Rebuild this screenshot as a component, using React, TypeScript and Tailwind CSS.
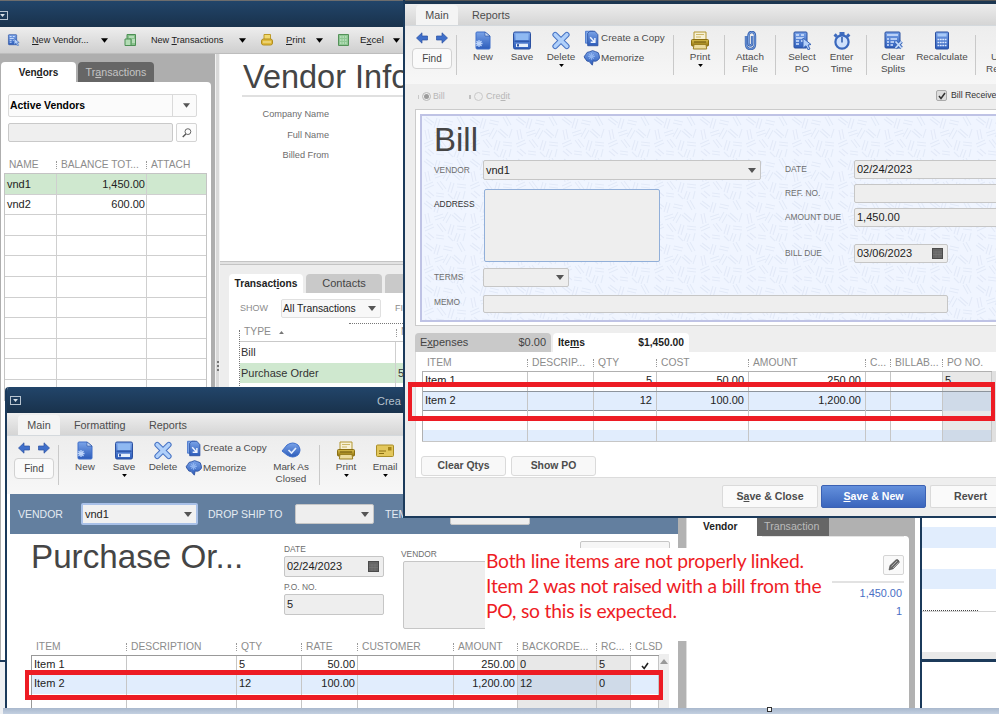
import type { ReactNode } from 'react';
import clsx from 'clsx';

type IconName = 'new' | 'save' | 'delete' | 'copy' | 'memorize' | 'print' | 'attach' | 'select' | 'time' | 'clear' | 'calc' | 'check' | 'email';

const blue = '#3f6fca';
const navy = '#2b50a0';

function Icon({ name, className = 'w-5 h-[19px]' }: { name: IconName; className?: string }) {
  return (
    <svg viewBox="0 0 20 19" className={clsx('shrink-0', className)} fill="none">
      <defs>
        <linearGradient id="ib" x1="0" y1="0" x2="0" y2="1">
          <stop offset="0" stopColor="#7aa3e8" />
          <stop offset="1" stopColor="#2c5cba" />
        </linearGradient>
        <linearGradient id="ig" x1="0" y1="0" x2="0" y2="1">
          <stop offset="0" stopColor="#d8bd4c" />
          <stop offset="1" stopColor="#917410" />
        </linearGradient>
      </defs>
      {name === 'new' && (
        <>
          <path d="M4 1h8l5 4v12q0 1-1 1H4q-1 0-1-1V2q0-1 1-1z" fill="url(#ib)" stroke={blue} />
          <path d="M12 1v4h5z" fill="#c6daf8" stroke={navy} strokeWidth=".6" />
          <path d="M6 9v7M2.500 12.500h7M3.500 10l5 5M8.500 10l-5 5" stroke="#bcd4fa" strokeWidth="1.300" />
        </>
      )}
      {name === 'save' && (
        <>
          <rect x="1.500" y="1" width="17" height="17" rx="1.500" fill="url(#ib)" stroke={navy} />
          <path d="M3.500 2.500h13v6.500h-13z" fill="#8fb9f2" />
          <path d="M2.500 10.200h15" stroke="#234b9d" />
          <rect x="4" y="12.700" width="12" height="3.300" fill="#e6effb" />
          <rect x="5" y="13.200" width="2" height="2.300" fill={navy} />
        </>
      )}
      {name === 'delete' && (
        <>
          <path d="M4.200 3.700l11.600 11.600M15.800 3.700L4.200 15.300" stroke="#4773c4" strokeWidth="5.600" strokeLinecap="round" />
          <path d="M4.200 3.700l11.600 11.600M15.800 3.700L4.200 15.300" stroke="#b0d0fa" strokeWidth="3.600" strokeLinecap="round" />
        </>
      )}
      {name === 'copy' && (
        <>
          <path d="M3 1h9v14H3z" fill="#7ea6e6" stroke={blue} />
          <path d="M5.500 3.500L8 1h6l3.500 4v13h-12z" fill="url(#ib)" stroke={navy} />
          <path d="M8.500 8l5 5.500M14 9v5H9" stroke="#eef4ff" strokeWidth="1.700" />
        </>
      )}
      {name === 'memorize' && (
        <>
          <path d="M3 11Q-.5 8 3 5.500 4 2 8 2q3-2.500 7 0 4 .5 4 4 2 4-2 6.500-2 1.500-5 .5l-1 5-4-4.500Q4 14 3 11z" fill="url(#ib)" stroke={navy} />
          <path d="M10 3.500v8M6 7.500h8M7.300 4.800l5.400 5.400M12.700 4.800l-5.400 5.400" stroke="#8fb4f0" strokeWidth="1.400" />
        </>
      )}
      {name === 'print' && (
        <>
          <path d="M4 1h12v9H4z" fill="#f7f1d6" stroke="#b39732" />
          <path d="M6 3.500h8M6 6h5" stroke="#ccb767" />
          <rect x="1.500" y="8.500" width="17" height="6.500" rx="1" fill="url(#ig)" stroke="#8a6e12" />
          <path d="M4 13.500h12l.7 4.500H3.300z" fill="#ecdc9d" stroke="#9b8022" />
          <path d="M4 11h12" stroke="#6f570c" />
        </>
      )}
      {name === 'attach' && (
        <>
          <path d="M6 5v8q0 5 4.500 5t4.500-5V5q0-4-3.200-4T8.500 5v7.500q0 2 1.800 2t1.800-2V5" stroke="#3560ad" strokeWidth="2.400" />
          <path d="M6 5v8q0 5 4.500 5t4.500-5V5q0-4-3.200-4T8.500 5v7.500q0 2 1.800 2t1.800-2V5" stroke="#88b0ee" strokeWidth=".8" />
        </>
      )}
      {name === 'select' && (
        <>
          <rect x="2" y="1" width="13" height="16" rx="1" fill="url(#ib)" stroke={navy} />
          <path d="M4 4h3M9 4h3M4 7h8M4 10h3M4 13h3M9 10h3" stroke="#d5e5ff" strokeWidth="1.500" />
          <path d="M11 7l8 6.500-3 .5 2 4-2 .8-2-4-3 2.200z" fill="#b5d1fa" stroke="#3b67b8" />
        </>
      )}
      {name === 'time' && (
        <>
          <path d="M7.500 1h5v3h-5zM1.500 4.500l2.200-2.200 2.200 2.200-2.200 2.200zM14 4.500l2.200-2.200 2.200 2.200-2.200 2.200z" fill="#3f6cbf" />
          <circle cx="10" cy="11" r="6.600" fill="#cfe1fc" stroke="#3a68bd" strokeWidth="2.200" />
          <path d="M10 6v5.500" stroke="#3560ad" strokeWidth="1.600" />
        </>
      )}
      {name === 'clear' && (
        <>
          <rect x="2" y="1" width="15" height="16" rx="1" fill="url(#ib)" stroke={navy} />
          <path d="M4 4h11M4 8h2M7.500 8H14M4 11h2M7.500 11H11M4 14h2M7.500 14H10" stroke="#d5e5ff" strokeWidth="1.400" />
          <path d="M12.500 10.500l6 6.500M18.500 10.500l-6 6.500" stroke="#3d69ba" strokeWidth="3.600" />
          <path d="M12.500 10.500l6 6.500M18.500 10.500l-6 6.500" stroke="#c5dbfb" strokeWidth="1.800" />
        </>
      )}
      {name === 'calc' && (
        <>
          <rect x="3.500" y="1" width="13" height="17" rx="1" fill="url(#ib)" stroke={navy} />
          <path d="M5.500 4h9" stroke="#a9caf8" strokeWidth="3" />
          <path d="M5.500 8.500h9M5.500 11.500h9M5.500 14.500h9" stroke="#dce9ff" strokeWidth="1.700" strokeDasharray="1.800 .6" />
        </>
      )}
      {name === 'check' && (
        <>
          <path d="M1 10l5-6q6-4 11 0 4 5 0 10-5 4-11 0z" fill="url(#ib)" stroke={blue} />
          <path d="M7.500 9l3 3 4.500-5" stroke="#e3eeff" strokeWidth="1.700" />
        </>
      )}
      {name === 'email' && (
        <>
          <rect x="1.500" y="4" width="17" height="11.500" rx="1" fill="#e3c75c" stroke="#a98d27" />
          <path d="M4 10h7M4 12.500h5" stroke="#8a6e12" />
          <rect x="13" y="6" width="3.500" height="3.500" fill="#a68518" />
        </>
      )}
    </svg>
  );
}

function Caret({ className = 'text-[#555]' }: { className?: string }) {
  return (
    <svg viewBox="0 0 8 5" className={clsx('w-2 h-[5px] shrink-0', className)} fill="currentColor">
      <path d="M0 0h8L4 5z" />
    </svg>
  );
}

function WindowMenu() {
  return (
    <span className="flex h-[9px] w-[11px] items-center justify-center border border-[#b8c4d0]">
      <Caret className="w-[5px]! h-[3px]! text-[#dbe3ea]" />
    </span>
  );
}

function ToolButton({ icon, label, className, menu }: { icon: IconName; label: ReactNode; className: string; menu?: boolean }) {
  return (
    <div className={clsx('flex shrink-0 flex-col items-center pt-[5px] text-center text-[9.900px] leading-3 text-[#4c4c4c]', className)}>
      <Icon name={icon} />
      <div className="mt-[1px] whitespace-nowrap">{label}</div>
      {menu && <Caret className="mt-[1px] w-[5px]! h-[3px]! text-black" />}
    </div>
  );
}

function Divider({ className }: { className?: string }) {
  return <div className={clsx('mt-[9px] h-10 w-px shrink-0 bg-[#c9c9c9]', className)} />;
}

function Arrow({ flip }: { flip?: boolean }) {
  return (
    <svg viewBox="0 0 12 12" className={clsx('h-3 w-3', flip && 'rotate-180')}>
      <path d="M.5 6L6 .8V4h5.500v4H6v3.200z" fill={blue} stroke={navy} strokeWidth=".7" />
    </svg>
  );
}

function ToolbarStart({ saveMenu, deleteMenu }: { saveMenu?: boolean; deleteMenu?: boolean }) {
  return (
    <>
      <div className="ml-[7px] w-10 shrink-0 pt-[6px]">
        <div className="flex justify-between pl-1 pr-1">
          <Arrow />
          <Arrow flip />
        </div>
        <div className="mt-[4px] flex h-[21px] items-center justify-center rounded-sm border border-[#d2d2d2] bg-[#fafafa] text-[10px] text-[#444]">Find</div>
      </div>
      <Divider className="ml-[4px]" />
      <ToolButton icon="new" label="New" className="ml-[6px] w-10" />
      <ToolButton icon="save" label="Save" className="w-[38px]" menu={saveMenu} />
      <ToolButton icon="delete" label="Delete" className="w-10" menu={deleteMenu} />
      <div className="ml-[2px] flex w-[88px] shrink-0 flex-col gap-[3px] pt-[3px] text-[9.900px] text-[#4c4c4c]">
        <div className="flex h-[17px] items-center gap-px pt-px">
          <Icon name="copy" className="h-[17px] w-[17px]" />
          Create a Copy
        </div>
        <div className="flex h-[17px] items-center gap-px pt-px">
          <Icon name="memorize" className="h-4 w-[17px]" />
          Memorize
        </div>
      </div>
    </>
  );
}

function Calendar() {
  return (
    <svg viewBox="0 0 11 11" className="h-[11px] w-[11px]">
      <rect x=".5" y=".5" width="10" height="10" fill="#666" stroke="#4b4b4b" />
      <path d="M1 4h9M1 6.500h9M4 3v7M7 3v7" stroke="#7a7a7a" strokeWidth=".6" />
    </svg>
  );
}

function Field({ className, children }: { className?: string; children?: ReactNode }) {
  return (
    <div className={clsx('flex shrink-0 items-center justify-between rounded-[2px] border border-[#c6c6c6] bg-[#eeeeee] pl-[2px] pr-1 text-[11px] text-[#222]', className)}>
      {children}
    </div>
  );
}

function HeaderCell({ children, first }: { children?: ReactNode; first?: boolean }) {
  return (
    <div className="flex items-center whitespace-nowrap pl-[5px]">
      {!first && <span className="-ml-[5px] mr-[4px] h-[8px] shrink-0 border-l border-dotted border-[#999]" />}
      {children}
    </div>
  );
}

function VendorCenter() {
  const vendors = [['vnd1', '1,450.00'], ['vnd2', '600.00'], ...Array(9).fill(['', ''])];
  return (
    <div className="absolute left-0 top-0 flex h-[662px] w-[420px] flex-col overflow-hidden border-b-2 border-[#1c3a5a] bg-white">
      <div className="flex h-[27px] shrink-0 items-center border-t border-[#6d6d6d] bg-gradient-to-b from-[#22456a] to-[#19324c] pt-[2px]">
        <div className="-ml-[3px]"><WindowMenu /></div>
      </div>
      <div className="flex h-[27px] shrink-0 items-center border-b border-[#bdbdbd] bg-gradient-to-b from-[#eeeeee] to-[#cfcfcf] text-[9.100px] text-[#222]">
        <Icon name="select" className="ml-[7px] h-3 w-[13px]" />
        <span className="ml-[12px] w-[69px] pt-px"><u>N</u>ew Vendor...</span>
        <Caret className="w-[7px]! text-black" />
        <svg viewBox="0 0 12 12" className="ml-[16px] h-3 w-3">
          <path d="M3 .5h8.500v11H3z" fill="#88c28c" stroke="#4d8f55" />
          <path d="M1 5h6v6.500H1z" fill="#b3dcb5" stroke="#4d8f55" />
          <path d="M5 3h5M8 6h3M8 8h3" stroke="#e3f4e3" />
        </svg>
        <span className="ml-[15px] w-[88px] pt-px">New <u>T</u>ransactions</span>
        <Caret className="w-[7px]! text-black" />
        <svg viewBox="0 0 12 12" className="ml-[15px] h-3 w-3">
          <path d="M3 .5h6.500V6H3z" fill="#f1d970" stroke="#bd9a28" />
          <rect x=".5" y="5" width="11" height="6" rx="2" fill="#dfb93b" stroke="#b18d1f" />
          <path d="M2 8h8" stroke="#f7e9a6" />
        </svg>
        <span className="ml-[13px] w-[30px] pt-px text-[9.400px]"><u>P</u>rint</span>
        <Caret className="w-[7px]! text-black" />
        <svg viewBox="0 0 11 12" className="ml-[15px] h-3 w-[11px]">
          <path d="M.5.5h10v11H.5z" fill="#8ec793" stroke="#549159" />
          <path d="M2 3h7M2 6h7M2 9h7" stroke="#d9f0da" strokeDasharray="1.500 1" />
        </svg>
        <span className="ml-[11px] w-[33px] pt-px text-[9.800px]">E<u>x</u>cel</span>
        <Caret className="w-[7px]! text-black" />
      </div>
      <div className="flex min-h-0 flex-1">
        <div className="flex w-[215px] shrink-0 flex-col bg-[#aeaeae] pl-px pt-2">
          <div className="flex h-5 gap-[2px]">
            <div className="flex w-[75px] items-center justify-center rounded-t-sm bg-white text-[10px] font-bold text-[#222]">Ven<u>d</u>ors</div>
            <div className="flex w-[76px] items-center justify-center rounded-t-sm bg-[#666] text-[10.700px] text-[#c4c4c4]">Tr<u>a</u>nsactions</div>
          </div>
          <div className="min-h-0 w-[210px] flex-1 overflow-hidden rounded-tr-sm bg-white pt-3">
            <div className="ml-[7px] flex h-[23px] w-[189px] items-center rounded-[2px] border border-[#dadada] bg-[#fbfbfb] text-[10.400px] font-bold text-black">
              <span className="w-[163px] pl-px">Active Vendors</span>
              <span className="flex h-full flex-1 items-center justify-center border-l border-[#dadada] pl-1"><Caret className="w-[7px]! text-[#555]" /></span>
            </div>
            <div className="ml-[7px] mt-[6px] flex h-[19px] gap-[3px]">
              <div className="w-[165px] rounded-[2px] border border-[#c9c9c9] bg-[#efefef]" />
              <div className="flex w-[21px] items-center justify-center rounded-[2px] border border-[#d4d4d4] bg-[#fcfcfc]">
                <svg viewBox="0 0 11 11" className="h-[10px] w-[10px]" fill="none" stroke="#555">
                  <circle cx="6.500" cy="4" r="3.200" />
                  <path d="M4.200 6.500L.8 10" strokeWidth="1.500" />
                </svg>
              </div>
            </div>
            <div className="mt-[14px] grid h-[17px] grid-cols-[52px_90px_60px] pl-[3px] text-[10.200px] text-[#8c8c8c]">
              <HeaderCell first>NAME</HeaderCell>
              <HeaderCell>BALANCE TOT...</HeaderCell>
              <HeaderCell>ATTACH</HeaderCell>
            </div>
            <div className="ml-[3px] w-[203px] border-x border-t border-[#c4c4c4]">
              {vendors.map(([name, total], i) => (
                <div key={i} className={clsx('grid h-[20.600px] grid-cols-[52px_90px_59px] border-b border-[#cfcfcf] text-[11px] text-[#222]', i === 0 && 'bg-[#cfe8cf]')}>
                  <div className="flex items-center border-r border-[#cfcfcf] pl-[2px]">{name}</div>
                  <div className="flex items-center justify-end border-r border-[#cfcfcf] pr-px">{total}</div>
                </div>
              ))}
            </div>
          </div>
        </div>
        <div className="flex w-[5px] shrink-0 flex-col items-center border-x border-[#f2f2f2] bg-[#d9d9d9] pt-[307px]">
          <span className="h-[10px] border-l-2 border-dotted border-[#777]" />
        </div>
        <div className="flex flex-1 flex-col bg-white">
          <div className="h-[207px] shrink-0">
            <div className="ml-[22px] h-[43px] whitespace-nowrap border-b-2 border-[#e0e0e0] pl-px pt-[4px] text-[32.500px] leading-[38px] text-[#454545]">Vendor Info</div>
            <div className="mt-[7px] w-[109px] text-right text-[9.200px] leading-[20.500px] text-[#6d6d6d]">
              <div>Company Name</div>
              <div>Full Name</div>
              <div>Billed From</div>
            </div>
          </div>
          <div className="h-[4px] shrink-0 border-y border-[#c4c4c4] bg-[#e2e2e2]" />
          <div className="min-h-0 flex-1 bg-[#ededed] pl-[9px] pt-[9px]">
            <div className="flex h-[19px] gap-[3px] text-[11px] text-[#444]">
              <div className="flex w-[74px] items-center justify-center rounded-t-sm bg-white text-[10.200px] font-bold text-[#222]">Transact<u>i</u>ons</div>
              <div className="flex w-[76px] items-center justify-center rounded-t-sm bg-[#c9c9c9]">Contacts</div>
              <div className="flex-1 rounded-t-sm bg-[#c9c9c9]" />
            </div>
            <div className="h-[360px] bg-white pt-[6px]">
              <div className="flex h-[19px] items-center text-[9px] text-[#8c8c8c]">
                <span className="w-[52px] pl-[11px]">SHOW</span>
                <span className="flex h-[19px] w-[100px] items-center justify-between rounded-[2px] border border-[#e0e0e0] bg-[#f8f8f8] pl-px pr-1 text-[10.300px] text-[#222]">All Transactions <Caret /></span>
                <span className="ml-[14px]">FI</span>
              </div>
              <div className="ml-[120px] mt-[5px] w-[56px] border-t border-dotted border-[#777]" />
              <div className="ml-[10px] mt-[6px] border-l border-dotted border-[#777]">
                <div className="grid h-[12px] grid-cols-[156px_60px] border-b border-[#c9c9c9] text-[10.300px] leading-none text-[#8c8c8c]">
                  <div className="-mt-[6px] flex items-center gap-[8px] pl-[4px]">TYPE <Caret className="w-[5px]! h-[3px]! rotate-180 text-[#777]" /></div>
                  <div className="-mt-[6px] flex"><HeaderCell>N</HeaderCell></div>
                </div>
                {[['Bill', ''], ['Purchase Order', '5'], ['', '']].map(([type, num]) => (
                  <div key={type} className={clsx('grid h-[20.500px] grid-cols-[156px_60px] text-[11px] text-[#333]', num && 'bg-[#cfe8cf]')}>
                    <div className="flex items-center border-r border-[#cfcfcf] pl-px">{type}</div>
                    <div className="flex items-center pl-[2px]">{num}</div>
                  </div>
                ))}
              </div>
            </div>
          </div>
        </div>
      </div>
    </div>
  );
}

function BackgroundList() {
  return (
    <div className="absolute left-[921px] top-[506px] flex h-[156px] w-[75px] flex-col border-b-[3px] border-[#1c3a5a] bg-white">
      <div className="mt-[21px] h-[21px] shrink-0 bg-[#e1edfd]" />
      <div className="mt-[21px] h-[20px] shrink-0 bg-[#e1edfd]" />
      <div className="mt-[21px] w-[57px] border-t border-dotted border-[#444]" />
      <div className="border-t border-[#d4d4d4]" />
      <div className="mt-auto h-[7px] bg-[#e9e9e9]" />
    </div>
  );
}

function PurchaseOrderWindow() {
  const rows = [
    ['Item 1', '5', '50.00', '250.00', '0', '5'],
    ['Item 2', '12', '100.00', '1,200.00', '12', '0'],
    ['', '', '', '', '', ''],
  ];
  return (
    <div className="absolute left-[5px] top-[387px] flex h-[322px] w-[917px] flex-col overflow-hidden rounded-tl-sm border-x-2 border-[#1b3a5b] bg-white">
      <div className="flex h-[26px] shrink-0 items-center bg-gradient-to-b from-[#22456a] to-[#19324c] pl-[3px] text-[11px] text-[#b6c1cc]">
        <WindowMenu />
        <span className="ml-[356px] mt-[2px]">Crea</span>
      </div>
      <div className="flex h-[23px] shrink-0 items-end border-b border-[#d4d9dd] bg-gradient-to-b from-[#efefef] to-[#d5d5d5] text-[10.800px] text-[#4c4c4c]">
        <div className="ml-[11px] flex h-[20px] w-[42px] items-center justify-center rounded-t-sm bg-[#f4f4f4]">Main</div>
        <div className="ml-[14px] flex h-[20px] w-[75px] items-center">Formatting</div>
        <div className="flex h-[20px] items-center">Reports</div>
      </div>
      <div className="flex h-[58px] shrink-0 bg-gradient-to-b from-[#ededed] to-[#f7f7f7]">
        <ToolbarStart saveMenu />
        <ToolButton icon="check" label={<>Mark As<br />Closed</>} className="-ml-[4px] w-[44px]" />
        <Divider className="ml-[6px]" />
        <ToolButton icon="print" label="Print" className="ml-[6px] w-10" menu />
        <ToolButton icon="email" label="Email" className="w-[38px]" menu />
      </div>
      <div className="flex min-h-0 flex-1">
        <div className="flex w-[671px] shrink-0 flex-col">
          <div className="ml-[3px] flex h-[40px] shrink-0 items-center bg-[#637f9f] text-[10.500px] text-[#e4ebf2]">
            <span className="w-[71px] pl-2 pt-[2px]">VENDOR</span>
            <Field className="h-[22px] w-[117px] border-2! border-[#a9c1e8]! bg-[#f1f1f1]! pr-[4px]">vnd1 <Caret /></Field>
            <span className="w-[97px] pl-[10px] pt-[2px]">DROP SHIP TO</span>
            <Field className="h-[20px] w-[79px]"><span /> <Caret /></Field>
            <span className="w-[76px] pl-[11px] pt-[2px]">TEM</span>
            <Field className="mt-[2px] h-[20px] w-[80px]" />
          </div>
          <div className="flex h-[105px] shrink-0">
            <div className="w-[277px] whitespace-nowrap pl-[24px] pt-[4px] text-[33.200px] leading-[38px] text-[#454545]">Purchase Or...</div>
            <div className="w-[117px] pt-[10px] text-[8.400px] leading-[11px] text-[#6d6d6d]">
              <div>DATE</div>
              <Field className="mt-px h-[21px] w-[100px]">02/24/2023 <Calendar /></Field>
              <div className="mt-[5px]">P.O. NO.</div>
              <Field className="mt-px h-[21px] w-[100px]">5</Field>
            </div>
            <div className="w-[179px] pt-[15px] text-[8.400px] leading-[11px] text-[#6d6d6d]">
              <div>VENDOR</div>
              <Field className="ml-[2px] mt-px h-[68px] w-[140px]" />
            </div>
            <Field className="mt-[7px] h-[20px] w-[90px] bg-[#f6f6f6]!"><span /> <Caret /></Field>
          </div>
          <div className="ml-[24px] flex">
            <div className="w-[628px]">
              <div className="grid h-[16px] grid-cols-[95px_110px_65px_56px_96px_64px_79px_34px_29px] text-[10.300px] text-[#8c8c8c]">
                <HeaderCell first>ITEM</HeaderCell>
                <HeaderCell>DESCRIPTION</HeaderCell>
                <HeaderCell>QTY</HeaderCell>
                <HeaderCell>RATE</HeaderCell>
                <HeaderCell>CUSTOMER</HeaderCell>
                <HeaderCell>AMOUNT</HeaderCell>
                <HeaderCell>BACKORDE...</HeaderCell>
                <HeaderCell>RC...</HeaderCell>
                <HeaderCell>CLSD</HeaderCell>
              </div>
              <div className="border-l border-t border-[#999]">
                {rows.map(([item, qty, rate, amount, back, rcvd], i) => (
                  <div key={i} className={clsx('grid h-[19px] grid-cols-[95px_110px_65px_56px_96px_64px_79px_34px_28px] text-[11px] text-[#222] *:flex *:items-center *:border-r *:border-[#c6c6c6] *:pb-[3px]', i === 1 && 'bg-[#e1edfd]')}>
                    <div className="pl-[2px]">{item}</div>
                    <div />
                    <div className="pl-[2px]">{qty}</div>
                    <div className="justify-end pr-[2px]">{rate}</div>
                    <div />
                    <div className="justify-end pr-[2px]">{amount}</div>
                    <div className={clsx('pl-[2px]', i === 1 ? 'bg-[#cfdae8]' : 'bg-[#e8e8e8]')}>{back}</div>
                    <div className={clsx('pl-[2px]', i === 1 ? 'bg-[#cfdae8]' : 'bg-[#e8e8e8]')}>{rcvd}</div>
                    <div className="justify-center">
                      {i === 0 && (
                        <svg viewBox="0 0 8 8" className="mt-[3px] h-2 w-2" fill="none" stroke="#222" strokeWidth="1.600">
                          <path d="M1 4l2.200 2.500L7 1" />
                        </svg>
                      )}
                    </div>
                  </div>
                ))}
              </div>
            </div>
            <div className="mt-[15px] flex h-[60px] w-[10px] justify-center bg-[#eee] pt-[5px]"><Caret className="rotate-180 text-[#999]" /></div>
          </div>
        </div>
        <div className="w-[9px] shrink-0 border-r border-[#ddd] bg-[#b2b2b2]" />
        <div className="flex w-[228px] flex-col bg-[#b1b1b1]">
          <div className="flex h-[43px] shrink-0 items-end">
            <div className="flex h-full w-[70px] items-end bg-white pb-[5px] pl-[16px] text-[10.200px] font-bold leading-none text-[#222]">Vendor</div>
            <div className="mb-px flex h-[42px] w-[72px] items-end bg-[#666] pb-[4px] pl-[7px] text-[10.700px] leading-none text-[#bbb]">Transaction</div>
          </div>
          <div className="-mt-px flex w-[222px] flex-1 flex-col items-end rounded-tr-sm bg-white pr-[5px] text-[10.900px] text-[#4a6fc4]">
            <div className="w-[142px] border-t border-[#e4e4e4]" />
            <div className="mt-[18px] flex h-[20px] w-[21px] items-center justify-center rounded-[2px] border border-[#d5d5d5] bg-[#f9f9f9]">
              <svg viewBox="0 0 12 12" className="h-3 w-3">
                <path d="M1 11l1-4.500L8 .8q2-.8 3 1.200l.2 1.500-6 6.300z" fill="#666" stroke="#444" strokeWidth=".6" />
                <path d="M3.500 7.500L9 2M5 9l5.500-5.500" stroke="#ddd" strokeWidth=".6" />
              </svg>
            </div>
            <div className="mt-[6px] w-[72px] border-t-2 border-[#e2e2e2]" />
            <div className="mr-[2px] mt-[2px]">1,450.00</div>
            <div className="mr-[2px] mt-[2px]">1</div>
          </div>
        </div>
        <div className="flex-1 bg-white" />
      </div>
    </div>
  );
}

function Hatching() {
  return (
    <svg className="absolute inset-0 h-full w-full">
      <defs>
        <pattern id="hatch" width="46" height="42" patternUnits="userSpaceOnUse">
          <path
            d="M2 3l8 6M4 1l8 6M15 2l-3 10M18 3l-3 10M22 4l9 2M21 7l9 2M35 1l5 9M38 0l5 9M3 14l2 10M6 13l2 10M12 17l9-3M13 20l9-3M26 12l-5 9M29 14l-5 9M32 13l8 7M30 15l8 7M44 13l-3 9M2 28l9-4M3 31l9-4M15 24l6 8M18 23l6 8M29 24l-3 10M32 25l-3 10M35 26l9 1M35 29l9 1M3 35l6 5M6 33l6 5M14 35l8 1M14 38l8 1M26 36l5 5M35 33l-3 8M38 34l-3 8M43 33l-2 8"
            stroke="#e3eaf8"
            strokeWidth="1.100"
            fill="none"
          />
        </pattern>
      </defs>
      <rect width="100%" height="100%" fill="url(#hatch)" />
    </svg>
  );
}

function BillForm() {
  return (
    <div className="ml-[10px] h-[217px] shrink-0 border border-r-0 border-[#cbcbcb] bg-white pb-[3px] pl-[4px] pt-[4px]">
      <div className="relative h-full overflow-hidden border-2 border-r-0 border-[#bfc3e5] bg-[#f0f5ff]">
        <Hatching />
        <div className="relative pl-[12px] text-[8.400px] text-[#6d6d6d]">
          <div className="flex">
            <div className="w-[351px] shrink-0">
              <div className="h-[44px] pt-[5px] text-[33px] leading-[38px] text-[#454545]">Bill</div>
              <div className="flex h-[20px] items-center">
                <span className="w-[49px]">VENDOR</span>
                <Field className="h-[20px] w-[278px]">vnd1 <Caret /></Field>
              </div>
              <div className="mt-[9px] flex">
                <span className="mt-[9px] w-[50px] text-[#333]">ADDRESS</span>
                <div className="h-[73px] w-[176px] rounded-[2px] border border-[#91afd9] bg-[#eeeeee]" />
              </div>
              <div className="mt-[6px] flex h-[19px] items-center">
                <span className="w-[49px]">TERMS</span>
                <Field className="h-[19px] w-[86px]"><span /> <Caret /></Field>
              </div>
            </div>
            <div className="flex-1 pt-[44px]">
              <div className="flex h-[19px] items-center">
                <span className="w-[69px] shrink-0">DATE</span>
                <Field className="h-[19px] w-[150px]">02/24/2023</Field>
              </div>
              <div className="mt-[5px] flex h-[19px] items-center">
                <span className="w-[69px] shrink-0">REF. NO.</span>
                <Field className="h-[19px] w-[150px]" />
              </div>
              <div className="mt-[5px] flex h-[19px] items-center">
                <span className="w-[69px] shrink-0">AMOUNT DUE</span>
                <Field className="h-[19px] w-[150px]">1,450.00</Field>
              </div>
              <div className="mt-[17px] flex h-[19px] items-center">
                <span className="w-[69px] shrink-0">BILL DUE</span>
                <Field className="h-[19px] w-[94px]">03/06/2023 <Calendar /></Field>
              </div>
            </div>
          </div>
          <div className="mt-[8px] flex h-[18px] items-center">
            <span className="w-[49px] pb-[4px]">MEMO</span>
            <Field className="h-[18px] w-[465px]" />
          </div>
        </div>
      </div>
    </div>
  );
}

function BillItems() {
  const rows = [
    ['Item 1', '5', '50.00', '250.00', '5'],
    ['Item 2', '12', '100.00', '1,200.00', ''],
    ['', '', '', '', ''],
    ['', '', '', '', ''],
  ];
  return (
    <div className="ml-[10px] mt-[7px] shrink-0">
      <div className="flex h-[19px] gap-[2px] text-[11px] text-[#444]">
        <div className="flex w-[136px] items-center justify-between rounded-t-sm bg-[#c9c9c9] pl-[5px] pr-[5px]">
          <span>E<u>x</u>penses</span>
          <span>$0.00</span>
        </div>
        <div className="flex w-[136px] items-center justify-between rounded-t-sm bg-white pl-[5px] pr-[5px] text-[10.300px] font-bold text-[#222]">
          <span>Ite<u>m</u>s</span>
          <span>$1,450.00</span>
        </div>
      </div>
      <div className="h-[126px] overflow-hidden border-b border-l border-[#dcdcdc] bg-white">
        <div className="ml-[6px] flex h-[90px]">
          <div className="w-[570px] shrink-0 overflow-hidden border-b border-[#c6c6c6]">
            <div className="grid h-[19px] grid-cols-[105px_66px_63px_92px_117px_25px_52px_50px] pt-[2px] text-[10.300px] text-[#8c8c8c]">
              <HeaderCell first>ITEM</HeaderCell>
              <HeaderCell>DESCRIP...</HeaderCell>
              <HeaderCell>QTY</HeaderCell>
              <HeaderCell>COST</HeaderCell>
              <HeaderCell>AMOUNT</HeaderCell>
              <HeaderCell>C...</HeaderCell>
              <HeaderCell>BILLAB...</HeaderCell>
              <HeaderCell>PO NO.</HeaderCell>
            </div>
            <div className="border-l border-t border-[#b0b0b0]">
              {rows.map(([item, qty, cost, amount, po], i) => (
                <div
                  key={i}
                  className={clsx(
                    'grid grid-cols-[105px_66px_63px_92px_117px_25px_52px_49px] text-[11px] text-[#222] *:flex *:items-center *:border-r *:border-[#c6c6c6] *:pb-[2px]',
                    i % 2 === 1 && 'bg-[#e1edfd]',
                    i === 1 ? 'h-[20px] border-y border-[#8d949c]' : 'h-[19px]',
                  )}
                >
                  <div className="pl-[2px]">{item}</div>
                  <div />
                  <div className="justify-end pr-[4px]">{qty}</div>
                  <div className="justify-end pr-[4px]">{cost}</div>
                  <div className="justify-end pr-[4px]">{amount}</div>
                  <div />
                  <div />
                  <div className={clsx('pl-[2px]', i % 2 ? 'bg-[#cfdae8]' : 'bg-[#e8e8e8]')}>{po}</div>
                </div>
              ))}
            </div>
          </div>
          <div className="mt-[19px] flex-1 bg-[#e0e0e0]" />
        </div>
        <div className="ml-[5px] mt-[14px] flex h-[20px] gap-[5px] text-[10.400px] font-bold text-[#4c4c4c] *:flex *:w-[85px] *:items-center *:justify-center *:rounded-[3px] *:border *:border-[#dadada] *:bg-[#f8f8f8]">
          <div>Clear Qtys</div>
          <div>Show PO</div>
        </div>
      </div>
    </div>
  );
}

function BillWindow() {
  return (
    <div className="absolute left-[403px] top-0 flex h-[518px] w-[593px] flex-col overflow-hidden border-b-[2px] border-l-2 border-[#1b3a5b] bg-[#eeeeee]">
      <div className="h-[4px] shrink-0 border-t border-[#555] bg-[#1c3651]" />
      <div className="flex h-[22px] shrink-0 items-end border-b border-[#d4d9dd] bg-gradient-to-b from-[#ededed] to-[#d5d5d5] text-[10.800px] text-[#4c4c4c]">
        <div className="ml-[11px] flex h-[20px] w-[42px] items-center justify-center rounded-t-sm bg-[#f4f4f4]">Main</div>
        <div className="ml-[14px] flex h-[20px] items-center">Reports</div>
      </div>
      <div className="flex h-[58px] shrink-0 bg-gradient-to-b from-[#ededed] to-[#f7f7f7]">
        <ToolbarStart deleteMenu />
        <Divider className="ml-[2px]" />
        <ToolButton icon="print" label="Print" className="ml-[6px] w-10" menu />
        <Divider className="ml-[4px]" />
        <ToolButton icon="attach" label={<>Attach<br />File</>} className="ml-[5px] w-10" />
        <Divider className="ml-[5px]" />
        <ToolButton icon="select" label={<>Select<br />PO</>} className="ml-[6px] w-10" />
        <ToolButton icon="time" label={<>Enter<br />Time</>} className="w-[39px]" />
        <Divider className="ml-[5px]" />
        <ToolButton icon="clear" label={<>Clear<br />Splits</>} className="ml-[6px] w-10" />
        <ToolButton icon="calc" label="Recalculate" className="ml-px w-14" />
        <Divider className="ml-[5px]" />
        <div className="ml-[10px] pt-[25px] text-[9.900px] leading-3 text-[#4c4c4c]">
          <div className="pl-[5px]">U</div>
          <div>Re</div>
        </div>
      </div>
      <div className="flex h-[25px] shrink-0 items-center text-[8.700px] text-[#b7b7b7]">
        <span className="ml-[13px] mr-[3px] h-1 border-l border-[#c9c9c9]" />
        <span className="flex h-[9px] w-[9px] items-center justify-center rounded-full border border-[#b9b9b9]">
          <span className="h-[5px] w-[5px] rounded-full bg-[#9b9b9b]" />
        </span>
        <span className="ml-[2px] w-[36px]">Bill</span>
        <span className="mr-[3px] h-1 border-l-2 border-[#c0c0c0]" />
        <span className="h-[9px] w-[9px] rounded-full border border-[#c9c9c9]" />
        <span className="ml-[3px] text-[9px]">Cre<u>d</u>it</span>
        <span className="mb-[2px] ml-auto flex h-[11px] w-[11px] items-center justify-center rounded-[2px] border border-[#aaa] bg-[#ddd]">
          <svg viewBox="0 0 8 8" className="h-2 w-2" fill="none" stroke="#333" strokeWidth="1.500"><path d="M1 4l2 2.500L7 1" /></svg>
        </span>
        <span className="mb-[2px] ml-[4px] w-[45px] whitespace-nowrap text-[#333]">Bill Receive</span>
      </div>
      <BillForm />
      <BillItems />
      <div className="flex shrink-0 justify-end pt-[7px] text-[10.600px] font-bold text-[#4c4c4c]">
        <div className="flex h-[23px] w-[96px] items-center justify-center rounded-[2px] border border-[#dadada] bg-[#fafafa]"><span>S<u>a</u>ve &amp; Close</span></div>
        <div className="ml-[3px] flex h-[23px] w-[105px] items-center justify-center rounded-[2px] border border-[#3b61b3] bg-gradient-to-b from-[#6490dc] to-[#3a65bd] text-white"><span><u>S</u>ave &amp; New</span></div>
        <div className="ml-[4px] flex h-[23px] w-[66px] items-center rounded-l-[2px] border border-r-0 border-[#dadada] bg-[#fafafa] pl-[23px]">Revert</div>
      </div>
    </div>
  );
}

export default function App() {
  return (
    <div className="relative h-[714px] w-[999px] overflow-hidden bg-white font-['Liberation_Sans',Arial,sans-serif]">
      <div className="absolute left-0 top-[662px] h-[52px] w-[5px] bg-[#eef0f3]" />
      <VendorCenter />
      <BackgroundList />
      <PurchaseOrderWindow />
      <BillWindow />
      <div className="absolute left-[485px] top-[548px] h-[93px] w-[346px] whitespace-nowrap bg-white pl-px font-['Lato',sans-serif] text-[19.300px] leading-[25px] tracking-[-0.21px] text-[#ee1c25]">
        Both line items are not properly linked.
        <br />
        Item 2 was not raised with a bill from the
        <br />
        PO, so this is expected.
      </div>
      <div className="absolute left-[408px] top-[382px] h-[39px] w-[587px] border-x-[4px] border-y-[5px] border-[#ed1c24]" />
      <div className="absolute left-[25px] top-[670px] h-[30px] w-[638px] border-x-[4px] border-y-[5px] border-[#ed1c24]" />
      <div className="absolute left-[3px] top-[708px] flex h-[6px] w-[996px] bg-gradient-to-b from-[#a9b8cd] to-[#c3d0e1]">
        <span className="ml-[764px] -mt-px h-[5px] w-[5px] border border-[#333] bg-white" />
      </div>
    </div>
  );
}
